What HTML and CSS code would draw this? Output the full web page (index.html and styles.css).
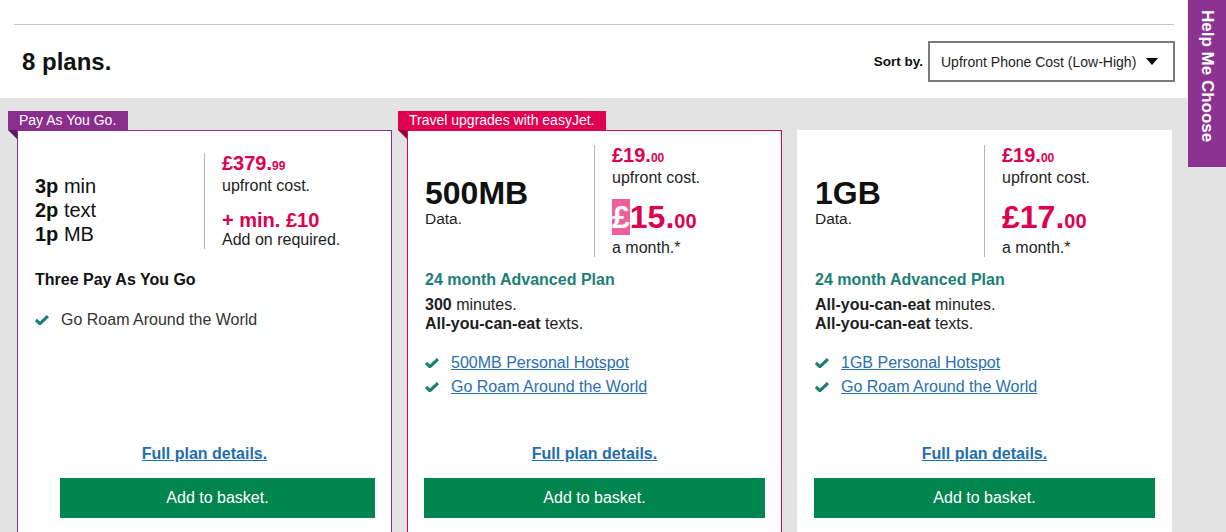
FILE: index.html
```html
<!DOCTYPE html>
<html lang="en">
<head>
<meta charset="utf-8">
<title>Plans</title>
<link rel="stylesheet" href="styles.css">
</head>
<body>
<a class="help" href="#">Help Me Choose</a>
<div class="toolbar-wrap">
  <header class="toolbar">
    <h1 class="count">8 plans.</h1>
    <div class="sort">
      <span class="sort-label">Sort by.</span>
      <div class="select">Upfront Phone Cost (Low-High)<span class="caret"></span></div>
    </div>
  </header>
</div>
<main class="plans">
  <div class="col">
    <div class="tag tag-purple">Pay As You Go.</div>
    <article class="card card-purple">
      <div class="summary">
        <div class="allow allow-payg">
          <div class="rate"><b>3p</b> min</div>
          <div class="rate"><b>2p</b> text</div>
          <div class="rate"><b>1p</b> MB</div>
        </div>
        <div class="price">
          <div class="up-price">£379.<small>99</small></div>
          <div class="note">upfront cost.</div>
          <div class="addon">+ min. £10</div>
          <div class="note">Add on required.</div>
        </div>
      </div>
      <div class="plan-name plan-name-dark">Three Pay As You Go</div>
      <ul class="features">
        <li><svg class="tick" viewBox="0 0 14 10" width="14" height="10"><path d="M0.9 5 L4.9 8.7 L13 1.1" fill="none" stroke="#1b7f76" stroke-width="3.2"/></svg><span class="plain">Go Roam Around the World</span></li>
      </ul>
      <div class="footer">
        <a class="details" href="#">Full plan details.</a>
        <button class="basket basket-narrow">Add to basket.</button>
      </div>
    </article>
  </div>

  <div class="col">
    <div class="tag tag-red">Travel upgrades with easyJet.</div>
    <article class="card card-red">
      <div class="summary">
        <div class="allow">
          <div class="data">500MB</div>
          <div class="data-label">Data.</div>
        </div>
        <div class="price">
          <div class="up-price">£19.<small>00</small></div>
          <div class="note">upfront cost.</div>
          <div class="monthly"><span class="hl">£</span>15.<small>00</small></div>
          <div class="note">a month.*</div>
        </div>
      </div>
      <div class="plan-name">24 month Advanced Plan</div>
      <div class="allowance"><b>300</b> minutes.</div>
      <div class="allowance"><b>All-you-can-eat</b> texts.</div>
      <ul class="features">
        <li><svg class="tick" viewBox="0 0 14 10" width="14" height="10"><path d="M0.9 5 L4.9 8.7 L13 1.1" fill="none" stroke="#1b7f76" stroke-width="3.2"/></svg><a href="#">500MB Personal Hotspot</a></li>
        <li><svg class="tick" viewBox="0 0 14 10" width="14" height="10"><path d="M0.9 5 L4.9 8.7 L13 1.1" fill="none" stroke="#1b7f76" stroke-width="3.2"/></svg><a href="#">Go Roam Around the World</a></li>
      </ul>
      <div class="footer">
        <a class="details" href="#">Full plan details.</a>
        <button class="basket">Add to basket.</button>
      </div>
    </article>
  </div>

  <div class="col">
    <div class="tag-spacer"></div>
    <article class="card card-plain">
      <div class="summary">
        <div class="allow">
          <div class="data">1GB</div>
          <div class="data-label">Data.</div>
        </div>
        <div class="price">
          <div class="up-price">£19.<small>00</small></div>
          <div class="note">upfront cost.</div>
          <div class="monthly">£17.<small>00</small></div>
          <div class="note">a month.*</div>
        </div>
      </div>
      <div class="plan-name">24 month Advanced Plan</div>
      <div class="allowance"><b>All-you-can-eat</b> minutes.</div>
      <div class="allowance"><b>All-you-can-eat</b> texts.</div>
      <ul class="features">
        <li><svg class="tick" viewBox="0 0 14 10" width="14" height="10"><path d="M0.9 5 L4.9 8.7 L13 1.1" fill="none" stroke="#1b7f76" stroke-width="3.2"/></svg><a href="#">1GB Personal Hotspot</a></li>
        <li><svg class="tick" viewBox="0 0 14 10" width="14" height="10"><path d="M0.9 5 L4.9 8.7 L13 1.1" fill="none" stroke="#1b7f76" stroke-width="3.2"/></svg><a href="#">Go Roam Around the World</a></li>
      </ul>
      <div class="footer">
        <a class="details" href="#">Full plan details.</a>
        <button class="basket">Add to basket.</button>
      </div>
    </article>
  </div>
</main>
</body>
</html>
```

FILE: styles.css
```css
* { box-sizing: border-box; }
html, body { margin: 0; padding: 0; }
body {
  font-family: "Liberation Sans", Arial, sans-serif;
  color: #1e1e1e;
  background: #e3e3e3;
  width: 1226px;
  overflow: hidden;
}

.help {
  position: absolute;
  top: 0;
  right: 0;
  width: 38px;
  height: 167px;
  background: #8c3290;
  color: #fff;
  text-decoration: none;
  font-weight: bold;
  font-size: 17px;
  writing-mode: vertical-rl;
  display: flex;
  align-items: center;
  padding-top: 10px;
  line-height: 38px;
  z-index: 2;
}

.toolbar-wrap {
  background: #fff;
  padding: 24px 52px 0 14px;
}
.toolbar {
  border-top: 1px solid #c4c4c4;
  height: 74px;
  display: flex;
  align-items: center;
  justify-content: space-between;
  padding-left: 8px;
}
.count {
  margin: 0;
  font-size: 24px;
  font-weight: bold;
  color: #111;
}
.sort {
  display: flex;
  align-items: center;
  gap: 5px;
  margin-right: -1px;
}
.sort-label {
  font-weight: bold;
  font-size: 13.5px;
  color: #111;
}
.select {
  width: 247px;
  height: 41px;
  border: 2px solid #7b7b7b;
  display: flex;
  align-items: center;
  justify-content: space-between;
  padding: 0 15px 0 11px;
  font-size: 14px;
  color: #1e1e1e;
  background: #fff;
}
.caret {
  width: 0;
  height: 0;
  border-left: 6px solid transparent;
  border-right: 6px solid transparent;
  border-top: 7px solid #000;
}

.plans {
  display: grid;
  grid-template-columns: repeat(3, 384px);
  column-gap: 6px;
  padding: 13px 0 0 8px;
}
.col {
  display: flex;
  flex-direction: column;
  align-items: flex-start;
}
.tag {
  position: relative;
  height: 19px;
  line-height: 19px;
  font-size: 14px;
  color: #fff;
  padding: 0 12px 0 11px;
}
.tag::after {
  content: "";
  position: absolute;
  left: 0;
  top: 19px;
  width: 0;
  height: 0;
  border-left: 9px solid transparent;
}
.tag-purple { background: #8a2e8c; }
.tag-purple::after { border-top: 9px solid #5c1a5e; }
.tag-red { background: #e0004f; }
.tag-red::after { border-top: 9px solid #9a0036; }
.tag-spacer { height: 19px; }

.card {
  margin-left: 9px;
  width: 375px;
  height: 413px;
  background: #fff;
  border: 1px solid #fff;
  display: flex;
  flex-direction: column;
}
.card-purple { border-color: #8a2e8c; }
.card-red { border-color: #cf0b55; }

.summary {
  display: flex;
  align-items: center;
  margin-top: 13px;
  height: 113px;
}
.allow {
  width: 186px;
  padding-left: 17px;
  padding-top: 4px;
}
.allow-payg { padding-top: 19px; }
.rate {
  font-size: 20px;
  line-height: 24px;
  color: #111;
}
.data {
  font-size: 32px;
  font-weight: bold;
  line-height: 32px;
  color: #111;
}
.data-label {
  font-size: 15.5px;
  line-height: 19px;
}
.price {
  border-left: 1px solid #b5b5b5;
  padding-left: 17px;
}
.up-price, .addon, .monthly {
  color: #de0050;
  font-weight: bold;
}
.up-price {
  font-size: 20px;
  line-height: 20px;
}
.up-price small {
  font-size: 12px;
}
.note {
  font-size: 16px;
  line-height: 19px;
}
.addon {
  font-size: 20px;
  line-height: 20px;
  margin-top: 15px;
}
.monthly {
  font-size: 32px;
  line-height: 36px;
  margin-top: 12px;
  margin-bottom: -1px;
}
.monthly small {
  font-size: 20px;
}
.hl {
  background: #ef5f9b;
  color: #fff;
}

.plan-name {
  margin: 13px 0 0 17px;
  font-size: 16px;
  font-weight: bold;
  line-height: 20px;
  color: #1b7f76;
}
.plan-name-dark { color: #111; }
.allowance {
  margin-left: 17px;
  font-size: 16px;
  line-height: 19px;
}
.plan-name + .allowance { margin-top: 5px; }

.features {
  list-style: none;
  margin: 18px 0 0 17px;
  padding: 0;
}
.features li {
  display: flex;
  align-items: center;
  height: 24px;
  font-size: 16px;
}
.tick {
  flex: none;
  margin-right: 12px;
}
.features a {
  color: #2a6eae;
}
.plain { color: #333; }

.footer {
  margin-top: auto;
  padding: 0 16px 24px;
  display: flex;
  flex-direction: column;
  align-items: center;
}
.details {
  font-size: 16px;
  font-weight: bold;
  line-height: 20px;
  color: #1f6eb0;
}
.basket {
  margin-top: 14px;
  width: 100%;
  height: 40px;
  border: 0;
  background: #00854f;
  color: #fff;
  font-family: "Liberation Sans", Arial, sans-serif;
  font-size: 16px;
  cursor: pointer;
}
.basket-narrow {
  width: calc(100% - 26px);
  margin-left: 26px;
}
```
